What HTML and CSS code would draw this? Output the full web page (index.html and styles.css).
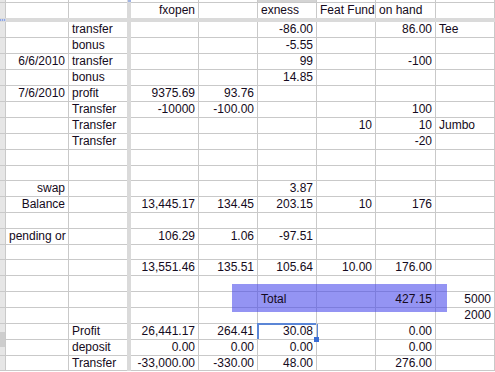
FILE: index.html
```html
<!DOCTYPE html>
<html>
<head>
<meta charset="utf-8">
<link rel="stylesheet" href="styles.css">
</head>
<body>
<div class="sheet">
  <div class="row top">
    <div class="rh"></div><div class="c"></div><div class="c nb"></div><div class="fz"><span class="fzmark"></span></div><div class="c"></div><div class="c"></div><div class="c colsel"></div><div class="c"></div><div class="c"></div><div class="c"></div>
  </div>
  <div class="row head">
    <div class="rh"></div><div class="c"></div><div class="c nb"></div><div class="fz"></div><div class="c r">fxopen</div><div class="c"></div><div class="c">exness</div><div class="c">Feat Fund</div><div class="c">on hand</div><div class="c"></div>
  </div>
  <div class="freeze"><span class="rowmark"></span></div>

  <div class="row"><div class="rh"></div><div class="c"></div><div class="c nb">transfer</div><div class="fz"></div><div class="c"></div><div class="c"></div><div class="c r">-86.00</div><div class="c"></div><div class="c r">86.00</div><div class="c">Tee</div></div>
  <div class="row"><div class="rh"></div><div class="c"></div><div class="c nb">bonus</div><div class="fz"></div><div class="c"></div><div class="c"></div><div class="c r">-5.55</div><div class="c"></div><div class="c"></div><div class="c"></div></div>
  <div class="row"><div class="rh"></div><div class="c r">6/6/2010</div><div class="c nb">transfer</div><div class="fz"></div><div class="c"></div><div class="c"></div><div class="c r">99</div><div class="c"></div><div class="c r">-100</div><div class="c"></div></div>
  <div class="row"><div class="rh"></div><div class="c"></div><div class="c nb">bonus</div><div class="fz"></div><div class="c"></div><div class="c"></div><div class="c r">14.85</div><div class="c"></div><div class="c"></div><div class="c"></div></div>
  <div class="row"><div class="rh"></div><div class="c r">7/6/2010</div><div class="c nb">profit</div><div class="fz"></div><div class="c r">9375.69</div><div class="c r">93.76</div><div class="c"></div><div class="c"></div><div class="c"></div><div class="c"></div></div>
  <div class="row"><div class="rh"></div><div class="c"></div><div class="c nb">Transfer</div><div class="fz"></div><div class="c r">-10000</div><div class="c r">-100.00</div><div class="c"></div><div class="c"></div><div class="c r">100</div><div class="c"></div></div>
  <div class="row"><div class="rh"></div><div class="c"></div><div class="c nb">Transfer</div><div class="fz"></div><div class="c"></div><div class="c"></div><div class="c"></div><div class="c r">10</div><div class="c r">10</div><div class="c">Jumbo</div></div>
  <div class="row"><div class="rh"></div><div class="c"></div><div class="c nb">Transfer</div><div class="fz"></div><div class="c"></div><div class="c"></div><div class="c"></div><div class="c"></div><div class="c r">-20</div><div class="c"></div></div>
  <div class="row"><div class="rh"></div><div class="c"></div><div class="c nb"></div><div class="fz"></div><div class="c"></div><div class="c"></div><div class="c"></div><div class="c"></div><div class="c"></div><div class="c"></div></div>
  <div class="row short"><div class="rh"></div><div class="c"></div><div class="c nb"></div><div class="fz"></div><div class="c"></div><div class="c"></div><div class="c"></div><div class="c"></div><div class="c"></div><div class="c"></div></div>
  <div class="row"><div class="rh"></div><div class="c r">swap</div><div class="c nb"></div><div class="fz"></div><div class="c"></div><div class="c"></div><div class="c r">3.87</div><div class="c"></div><div class="c"></div><div class="c"></div></div>
  <div class="row"><div class="rh"></div><div class="c r">Balance</div><div class="c nb"></div><div class="fz"></div><div class="c r">13,445.17</div><div class="c r">134.45</div><div class="c r">203.15</div><div class="c r">10</div><div class="c r">176</div><div class="c"></div></div>
  <div class="row"><div class="rh"></div><div class="c"></div><div class="c nb"></div><div class="fz"></div><div class="c"></div><div class="c"></div><div class="c"></div><div class="c"></div><div class="c"></div><div class="c"></div></div>
  <div class="row"><div class="rh"></div><div class="c">pending or</div><div class="c nb"></div><div class="fz"></div><div class="c r">106.29</div><div class="c r">1.06</div><div class="c r">-97.51</div><div class="c"></div><div class="c"></div><div class="c"></div></div>
  <div class="row short"><div class="rh"></div><div class="c"></div><div class="c nb"></div><div class="fz"></div><div class="c"></div><div class="c"></div><div class="c"></div><div class="c"></div><div class="c"></div><div class="c"></div></div>
  <div class="row"><div class="rh"></div><div class="c"></div><div class="c nb"></div><div class="fz"></div><div class="c r">13,551.46</div><div class="c r">135.51</div><div class="c r">105.64</div><div class="c r">10.00</div><div class="c r">176.00</div><div class="c"></div></div>
  <div class="row"><div class="rh"></div><div class="c"></div><div class="c nb"></div><div class="fz"></div><div class="c"></div><div class="c"></div><div class="c"></div><div class="c"></div><div class="c"></div><div class="c"></div></div>
  <div class="row"><div class="rh"></div><div class="c"></div><div class="c nb"></div><div class="fz"></div><div class="c"></div><div class="c"></div><div class="c"><span class="above">Total</span></div><div class="c"></div><div class="c r"><span class="above">427.15</span></div><div class="c r">5000</div></div>
  <div class="row"><div class="rh"></div><div class="c"></div><div class="c nb"></div><div class="fz"></div><div class="c"></div><div class="c"></div><div class="c"></div><div class="c"></div><div class="c"></div><div class="c r">2000</div></div>
  <div class="row"><div class="rh"></div><div class="c"></div><div class="c nb">Profit</div><div class="fz"></div><div class="c r">26,441.17</div><div class="c r">264.41</div><div class="c r sel">30.08<span class="handle"></span></div><div class="c"></div><div class="c r">0.00</div><div class="c"></div></div>
  <div class="row"><div class="rh"></div><div class="c"></div><div class="c nb">deposit</div><div class="fz"></div><div class="c r">0.00</div><div class="c r">0.00</div><div class="c r">0.00</div><div class="c"></div><div class="c r">0.00</div><div class="c"></div></div>
  <div class="row short"><div class="rh"></div><div class="c"></div><div class="c nb">Transfer</div><div class="fz"></div><div class="c r">-33,000.00</div><div class="c r">-330.00</div><div class="c r">48.00</div><div class="c"></div><div class="c r">276.00</div><div class="c"></div></div>

  <div class="range"></div>
  <div class="rowsel"></div>
</div>
</body>
</html>
```
FILE: styles.css
```css
html, body {
  margin: 0;
  padding: 0;
  background: #fff;
  overflow: hidden;
}
.sheet {
  position: relative;
  width: 495px;
  height: 372px;
  overflow: hidden;
  font-family: "Liberation Sans", Arial, sans-serif;
  font-size: 12px;
  color: #140a20;
}
.row {
  display: grid;
  grid-template-columns: 6px 63px 58px 4px 68px 59px 59px 59px 60px 59px;
  height: 16px;
}
.row.short { height: 15px; }
.row.top { height: 3px; }
.row.head { height: 15px; }
.row.head .c, .row.head .rh { border-bottom: none; }
.c, .rh {
  box-sizing: border-box;
  border-right: 1px solid #c9c9c9;
  border-bottom: 1px solid #c9c9c9;
  padding: 0 3px;
  line-height: 15px;
  white-space: nowrap;
  overflow: hidden;
}
.c.nb { border-right: none; }
.c.r { text-align: right; }
.rh {
  padding: 0;
  background: #e6e6e6;
}
.fz {
  background: #dadada;
  position: relative;
}
.colsel { background: #d4d4d4; }
.fzmark {
  position: absolute;
  left: 1px;
  top: 0;
  width: 3px;
  height: 2px;
  background: #9fb3e6;
}
.freeze {
  position: relative;
  height: 4px;
  background: #dadada;
}
.rowmark {
  position: absolute;
  left: 0;
  top: 1px;
  width: 6px;
  height: 2px;
  background: repeating-linear-gradient(90deg, #8ea6e4 0 1px, #c9d3ee 1px 2px);
}
.above {
  position: relative;
  z-index: 3;
}
.sel {
  position: relative;
  overflow: visible;
  box-shadow: inset 1px 1px 0 #5b86d6, -1px -1px 0 #5b86d6, 1px 0 0 #5b86d6;
}
.handle {
  position: absolute;
  right: -3px;
  bottom: -3px;
  width: 5px;
  height: 5px;
  background: #3a6cd4;
  z-index: 2;
}
.range {
  position: absolute;
  z-index: 1;
  left: 232px;
  top: 284px;
  width: 215px;
  height: 28px;
  background: rgba(70, 70, 235, 0.58);
}
.rowsel {
  position: absolute;
  left: 0;
  top: 332px;
  width: 5px;
  height: 15px;
  background: #cdcdcd;
}
```
